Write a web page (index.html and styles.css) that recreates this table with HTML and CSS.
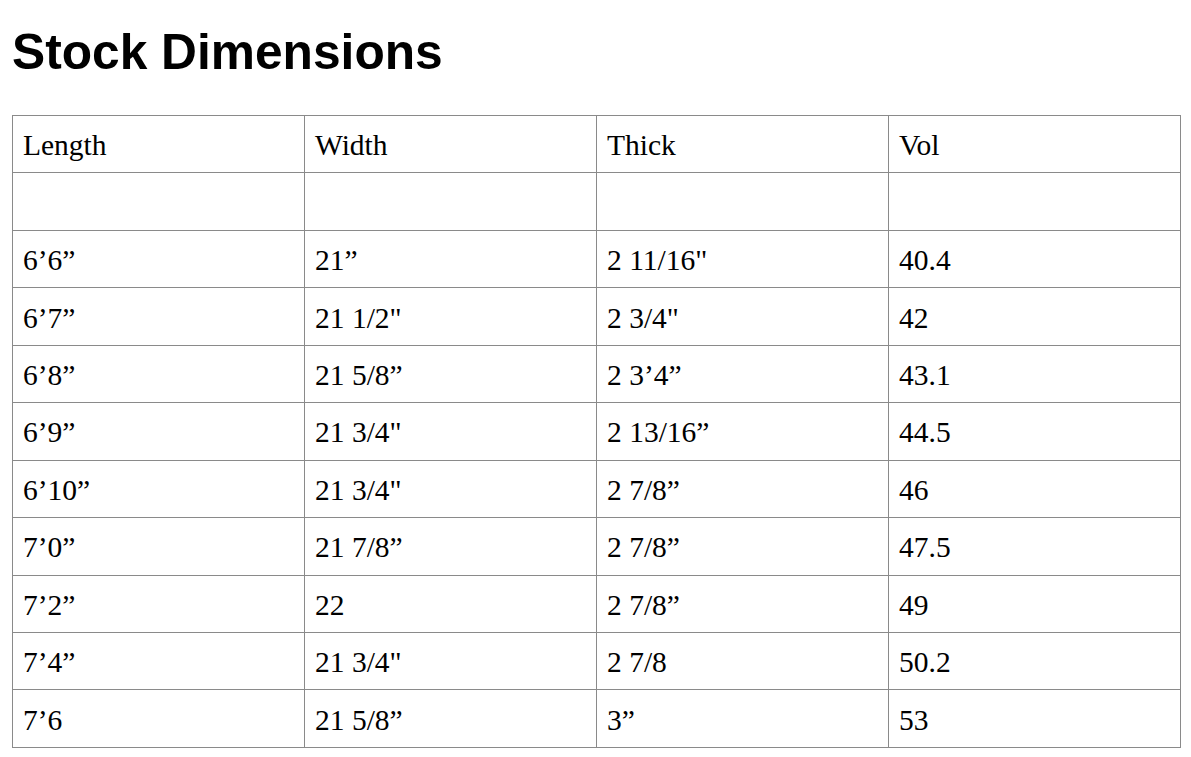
FILE: index.html
```html
<!DOCTYPE html>
<html>
<head>
<meta charset="utf-8">
<link rel="stylesheet" href="styles.css">
</head>
<body>
<h1 class="title">Stock Dimensions</h1>
<table class="dims">
<tbody>
<tr><td>Length</td><td>Width</td><td>Thick</td><td>Vol</td></tr>
<tr><td></td><td></td><td></td><td></td></tr>
<tr><td>6’6”</td><td>21”</td><td>2 11/16"</td><td>40.4</td></tr>
<tr><td>6’7”</td><td>21 1/2"</td><td>2 3/4"</td><td>42</td></tr>
<tr><td>6’8”</td><td>21 5/8”</td><td>2 3’4”</td><td>43.1</td></tr>
<tr><td>6’9”</td><td>21 3/4"</td><td>2 13/16”</td><td>44.5</td></tr>
<tr><td>6’10”</td><td>21 3/4"</td><td>2 7/8”</td><td>46</td></tr>
<tr><td>7’0”</td><td>21 7/8”</td><td>2 7/8”</td><td>47.5</td></tr>
<tr><td>7’2”</td><td>22</td><td>2 7/8”</td><td>49</td></tr>
<tr><td>7’4”</td><td>21 3/4"</td><td>2 7/8</td><td>50.2</td></tr>
<tr><td>7’6</td><td>21 5/8”</td><td>3”</td><td>53</td></tr>
</tbody>
</table>
</body>
</html>
```

FILE: styles.css
```css
html, body {
  margin: 0;
  padding: 0;
  background: #ffffff;
}
body {
  padding: 0 10px 0 12px;
  color: #000000;
}
.title {
  font-family: "Liberation Sans", Arial, sans-serif;
  font-weight: bold;
  font-size: 49.7px;
  line-height: 56px;
  margin: 0;
  padding-top: 24px;
  padding-bottom: 35px;
}
.dims {
  border-collapse: collapse;
  table-layout: fixed;
  width: 1169px;
  font-family: "Liberation Serif", "Times New Roman", serif;
  font-size: 29.5px;
}
.dims tr {
  height: 57.45px;
}
.dims td {
  width: 25%;
  border: 1px solid #8a8a8a;
  padding: 3px 10px 0 10px;
  vertical-align: middle;
  white-space: nowrap;
}
```
